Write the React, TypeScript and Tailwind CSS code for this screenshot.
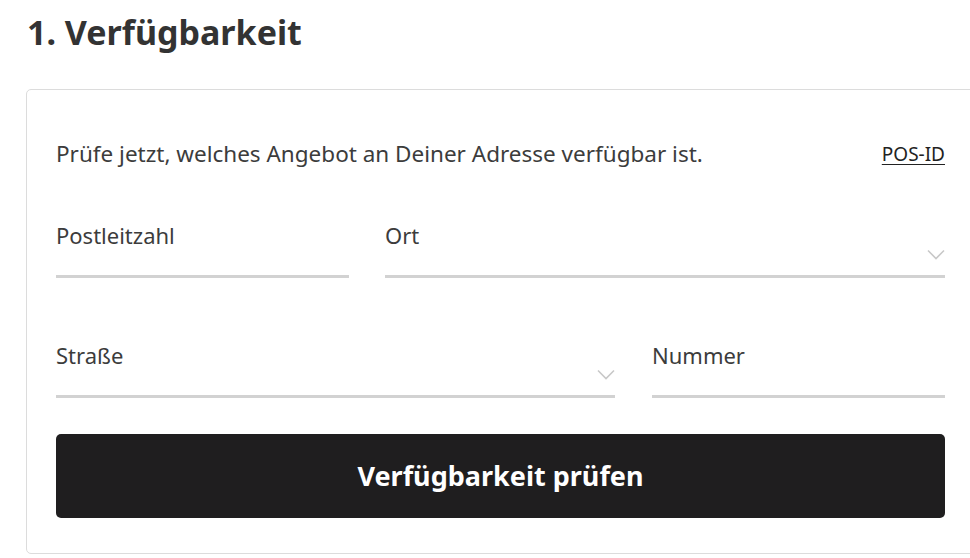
import React from "react";

function Chevron() {
  return (
    <svg width="18" height="11" viewBox="0 0 18 11" fill="none" className="text-[#c8c8c8]">
      <path d="M1 1.5 L9 9.5 L17 1.5" stroke="currentColor" strokeWidth="1.6" />
    </svg>
  );
}

function Field({ label, select, className }: { label: string; select?: boolean; className?: string }) {
  return (
    <div className={"relative h-[58px] border-b-[3px] border-[#d2d2d2] " + (className ?? "")}>
      <div className="text-[22px] leading-[30px] text-[#3c3c3c]">{label}</div>
      {select && (
        <div className="absolute right-0 bottom-[15px] flex">
          <Chevron />
        </div>
      )}
    </div>
  );
}

export default function App() {
  return (
    <div
      className="w-[970px] h-[558px] overflow-hidden bg-white text-[#333]"
      style={{ fontFamily: '"Noto Sans", "Open Sans", sans-serif' }}
    >
      <h1 className="pl-[27px] pt-[10px] text-[34px] leading-[44px] font-bold text-[#333]">1. Verfügbarkeit</h1>
      <div className="ml-[26px] mt-[35px] w-[950px] rounded-[5px] border border-[#dcdcdc] pl-[29px] pr-[30px] pt-[49px] pb-[35px]">
        <div className="flex items-center justify-between">
          <p className="text-[22.5px] leading-[30px] text-[#3c3c3c]">
            Prüfe jetzt, welches Angebot an Deiner Adresse verfügbar ist.
          </p>
          <a className="text-[19px] leading-[30px] text-[#222] underline underline-offset-[3px]">POS-ID</a>
        </div>
        <div className="mt-[51px] flex gap-[36px]">
          <Field label="Postleitzahl" className="w-[293px]" />
          <Field label="Ort" select className="flex-1" />
        </div>
        <div className="mt-[62px] flex gap-[37px]">
          <Field label="Straße" select className="flex-1" />
          <Field label="Nummer" className="w-[293px]" />
        </div>
        <button className="mt-[36px] flex h-[84px] w-full items-center justify-center rounded-[5px] bg-[#1f1e1f] text-[27px] font-bold text-white">
          Verfügbarkeit prüfen
        </button>
      </div>
    </div>
  );
}
